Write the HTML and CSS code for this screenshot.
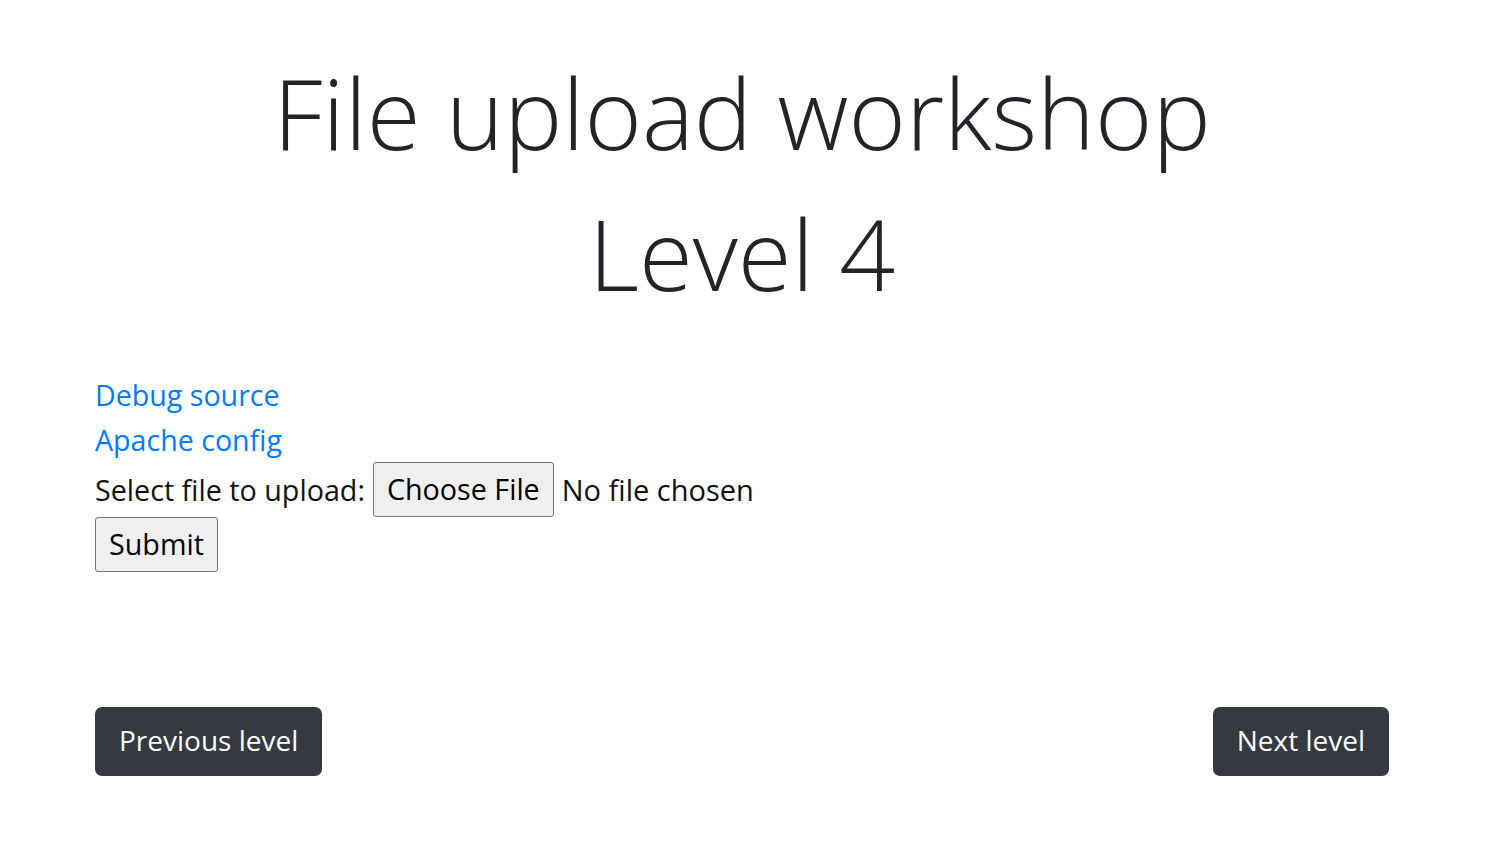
FILE: index.html
```html
<!DOCTYPE html>
<html lang="en">
<head>
<meta charset="utf-8">
<title>File upload workshop - Level 4</title>
<link rel="stylesheet" href="styles.css">
</head>
<body>
<main class="page">
  <h1 class="title">File upload workshop<br>Level 4</h1>
  <nav class="links">
    <a class="link" href="#">Debug source</a>
    <a class="link" href="#">Apache config</a>
  </nav>
  <form class="upload">
    <div class="upload-row">
      <span class="upload-label">Select file to upload:</span>
      <button type="button" class="sys-btn">Choose File</button>
      <span class="upload-status">No file chosen</span>
    </div>
    <div class="submit-row">
      <button type="submit" class="sys-btn">Submit</button>
    </div>
  </form>
  <div class="pager">
    <a class="dark-btn" href="#">Previous level</a>
    <a class="dark-btn" href="#">Next level</a>
  </div>
</main>
</body>
</html>
```

FILE: styles.css
```css
html, body {
  margin: 0;
  padding: 0;
  background: #ffffff;
}

body {
  font-family: "Open Sans", "Noto Sans", sans-serif;
  color: #212529;
}

.page {
  padding: 42px 111px 0 95px;
  display: flex;
  flex-direction: column;
}

.title {
  margin: 0;
  font-weight: 300;
  font-size: 98px;
  line-height: 141px;
  text-align: center;
  color: #212529;
}

.links {
  margin-top: 48px;
  display: flex;
  flex-direction: column;
  align-items: flex-start;
}

.link {
  font-size: 28.6px;
  line-height: 45px;
  color: #007bff;
  text-decoration: none;
}

.upload {
  margin: 0;
  display: flex;
  flex-direction: column;
  align-items: flex-start;
}

.upload-row {
  display: flex;
  align-items: center;
  gap: 8px;
  font-size: 28.7px;
  color: #111;
}

.upload-status {
  font-size: 29px;
}

.sys-btn {
  font-family: "Open Sans", "Noto Sans", sans-serif;
  font-size: 28.7px;
  color: #000;
  background: #efefef;
  border: 1px solid #767676;
  border-radius: 3px;
  height: 55px;
  padding: 0 13px;
  line-height: 1;
}

.submit-row {
  display: flex;
}

.pager {
  margin-top: 135px;
  display: flex;
  justify-content: space-between;
}

.dark-btn {
  display: inline-flex;
  align-items: center;
  height: 69px;
  padding: 0 24px 4px;
  box-sizing: border-box;
  background: #343a40;
  color: #ffffff;
  border-radius: 7px;
  font-size: 28px;
  text-decoration: none;
}
```
